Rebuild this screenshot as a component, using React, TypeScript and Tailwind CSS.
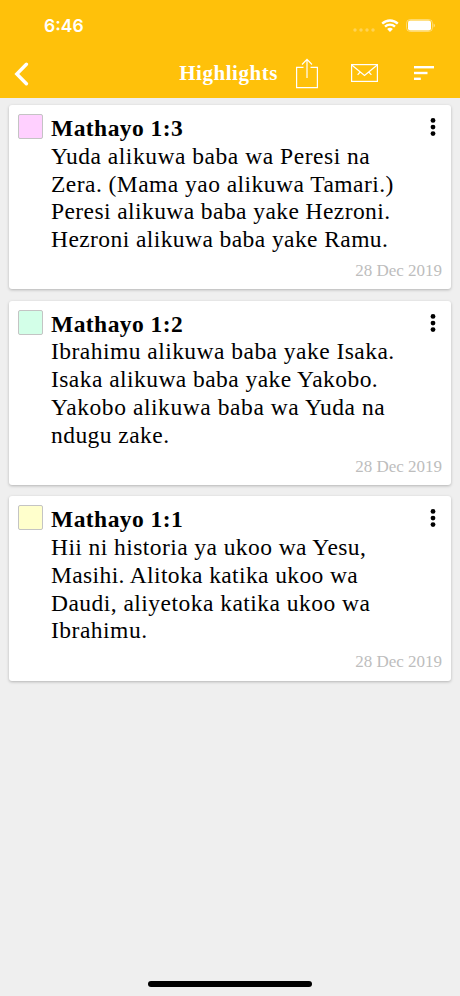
type Highlight = {
  title: string;
  lines: { text: string; tracking: string }[];
  date: string;
  swatch: string;
};

const highlights: Highlight[] = [
  {
    title: "Mathayo 1:3",
    lines: [
      { text: "Yuda alikuwa baba wa Peresi na", tracking: "tracking-[0.53px]" },
      { text: "Zera. (Mama yao alikuwa Tamari.)", tracking: "tracking-[0.46px]" },
      { text: "Peresi alikuwa baba yake Hezroni.", tracking: "tracking-[0.42px]" },
      { text: "Hezroni alikuwa baba yake Ramu.", tracking: "tracking-[0.42px]" },
    ],
    date: "28 Dec 2019",
    swatch: "bg-[#ffd0ff]",
  },
  {
    title: "Mathayo 1:2",
    lines: [
      { text: "Ibrahimu alikuwa baba yake Isaka.", tracking: "tracking-[0.47px]" },
      { text: "Isaka alikuwa baba yake Yakobo.", tracking: "tracking-[0.45px]" },
      { text: "Yakobo alikuwa baba wa Yuda na", tracking: "tracking-[0.57px]" },
      { text: "ndugu zake.", tracking: "tracking-[0.45px]" },
    ],
    date: "28 Dec 2019",
    swatch: "bg-[#d3ffe8]",
  },
  {
    title: "Mathayo 1:1",
    lines: [
      { text: "Hii ni historia ya ukoo wa Yesu,", tracking: "tracking-[0.43px]" },
      { text: "Masihi. Alitoka katika ukoo wa", tracking: "tracking-[0.38px]" },
      { text: "Daudi, aliyetoka katika ukoo wa", tracking: "tracking-[0.47px]" },
      { text: "Ibrahimu.", tracking: "tracking-[0.5px]" },
    ],
    date: "28 Dec 2019",
    swatch: "bg-[#ffffcc]",
  },
];

const StatusBar = () => (
  <div className="flex h-[49px] items-center justify-between pl-[44px] pr-[25px] pt-[2px]">
    <span className="font-['Inter',sans-serif] text-[17.5px] font-semibold leading-none">6:46</span>
    <div className="flex items-center">
      <svg width="22" height="4" viewBox="0 0 22 4" className="mt-[9px]" fill="#fff" opacity="0.3">
        <circle cx="2" cy="2" r="1.7" />
        <circle cx="8" cy="2" r="1.7" />
        <circle cx="14" cy="2" r="1.7" />
        <circle cx="20" cy="2" r="1.7" />
      </svg>
      <svg width="18" height="14" viewBox="0 0 18 14" className="ml-[6px]" fill="none" stroke="#fff">
        <path d="M1.2 4.6A11.2 11.2 0 0 1 16.8 4.6" strokeWidth="2.4" />
        <path d="M4 7.7A7.2 7.2 0 0 1 14 7.7" strokeWidth="2.3" />
        <path d="M6.1 10.1A4.2 4.2 0 0 1 11.9 10.1L9 13Z" fill="#fff" stroke="none" />
      </svg>
      <svg width="29" height="13" viewBox="0 0 29 13" className="ml-[7px]">
        <rect x="0.5" y="0.5" width="26" height="12" rx="3.8" fill="none" stroke="#fff" opacity="0.4" />
        <rect x="2" y="1.5" width="23" height="10" rx="2.3" fill="#fff" />
        <path d="M27.6 4.5q1.3 .6 1.3 2t-1.3 2z" fill="#fff" opacity="0.5" />
      </svg>
    </div>
  </div>
);

const Toolbar = () => (
  <div className="flex h-[49px] items-center pl-[14px] pr-[26px]">
    <svg width="16" height="24" viewBox="0 0 16 24" fill="none" stroke="#fff" strokeWidth="3.4">
      <path d="M12.4 2.2L2.8 12L12.4 21.8" strokeLinecap="round" />
    </svg>
    <h1 className="ml-auto whitespace-nowrap text-[21px] font-bold leading-none tracking-[0.55px]">
      Highlights
    </h1>
    <svg width="22" height="31" viewBox="0 0 22 31" className="ml-[18px]" fill="none" stroke="#fff" strokeWidth="1.2">
      <path d="M7.5 9.3H.6V29.7H21.4V9.3H14.5" />
      <path d="M11 20V1.5M6 6.5L11 1.3L16 6.5" />
    </svg>
    <svg width="27" height="18" viewBox="0 0 27 18" className="mb-[1px] ml-[33px]" fill="none" stroke="#fff" strokeWidth="1.2">
      <rect x="0.6" y="0.6" width="25.8" height="16.8" />
      <path d="M.8 1L13.5 11.5L26.2 1M9.2 8L6.6 10.8M17.8 8L20.4 10.8" />
    </svg>
    <svg width="20" height="14" viewBox="0 0 20 14" className="mb-[2px] ml-[36px]" fill="#fff">
      <rect width="20" height="2.4" />
      <rect y="5.8" width="13.5" height="2.4" />
      <rect y="11.6" width="6.8" height="2.4" />
    </svg>
  </div>
);

const HighlightCard = ({ item }: { item: Highlight }) => (
  <article className="flex h-[184.4px] rounded-[3px] bg-white pl-[9px] pr-[9px] pt-[9px] shadow-[0_1px_3px_rgba(0,0,0,0.25)]">
    <div className={`size-[25px] shrink-0 rounded-[2px] border border-[#c4c4c4] ${item.swatch}`} />
    <div className="flex min-w-0 flex-1 flex-col pl-[8px] pt-[1px]">
      <div className="flex justify-between">
        <h2 className="whitespace-nowrap text-[23.5px] font-bold leading-[27.8px] tracking-[0.45px]">{item.title}</h2>
        <svg width="6" height="18" viewBox="0 0 6 18" className="mr-[6px] mt-[3px]">
          <circle cx="3" cy="2.4" r="2.4" />
          <circle cx="3" cy="9.1" r="2.4" />
          <circle cx="3" cy="15.6" r="2.4" />
        </svg>
      </div>
      {item.lines.map((line) => (
        <p key={line.text} className={`whitespace-nowrap text-[23.5px] leading-[27.8px] ${line.tracking}`}>
          {line.text}
        </p>
      ))}
      <time className="mt-[7px] self-end text-[17px] leading-[20px] text-[#bdbdbd]">{item.date}</time>
    </div>
  </article>
);

export default function App() {
  return (
    <div className="flex h-[996px] w-[460px] flex-col overflow-hidden bg-[#efefef] font-['Liberation_Serif',serif] text-black">
      <header className="h-[98px] shrink-0 bg-[#ffc10a] text-white">
        <StatusBar />
        <Toolbar />
      </header>
      <main className="flex flex-1 flex-col gap-[11.2px] px-[9px] pt-[7px]">
        {highlights.map((item) => (
          <HighlightCard key={item.title} item={item} />
        ))}
      </main>
      <div className="mb-[9px] h-[6px] w-[164px] self-center rounded-full bg-black" />
    </div>
  );
}
